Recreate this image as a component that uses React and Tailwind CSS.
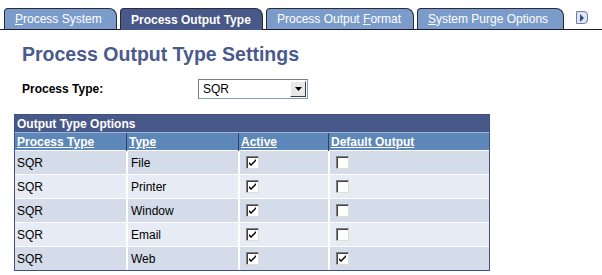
const tabs = [
  { pre: "", u: "P", post: "rocess System", w: "w-[113px]" },
  { pre: "Process Output Type", u: "", post: "", w: "w-[143px]", active: true },
  { pre: "Process Output ", u: "F", post: "ormat", w: "w-[148px]" },
  { pre: "", u: "S", post: "ystem Purge Options", w: "w-[147px]" },
];

const rows = [
  { type: "File", def: false },
  { type: "Printer", def: false },
  { type: "Window", def: false },
  { type: "Email", def: false },
  { type: "Web", def: true },
];

const Check = ({ on }) => (
  <span className="inline-flex items-center justify-center w-[13px] h-[13px] bg-white border border-t-[#808080] border-l-[#808080] border-r-[#e0ddd5] border-b-[#e0ddd5] shadow-[inset_1px_1px_0_#404040]">
    {on && (
      <svg width="9" height="9" viewBox="0 0 9 9">
        <path d="M1 4 L3 6 L8 1 L8 3 L3 8 L1 6 Z" fill="#000" />
      </svg>
    )}
  </span>
);

export default function App() {
  return (
    <div className="w-[602px] h-[275px] bg-white font-['Liberation_Sans',Arial,sans-serif] text-black overflow-hidden">
      <div className="flex items-end pl-[4px] pt-[8px] border-b border-[#1a1a2e] h-[30px]">
        {tabs.map((t, i) => (
          <div
            key={i}
            className={`${t.w} h-[21px] mr-[3px] flex items-center pl-[10px] text-[12px] text-white border border-[#2a2a3a] rounded-tl-[4px] rounded-tr-[8px] ${
              t.active ? "bg-[#485888] font-bold border-b-0 h-[22px] -mb-px" : "bg-[#7b9ccb] border-b-0"
            }`}
          >
            <span className="whitespace-pre">
              {t.pre}
              {t.u && <span className="underline">{t.u}</span>}
              {t.post}
            </span>
          </div>
        ))}
        <div className="ml-[9px] mb-[5px] w-[12px] h-[13px] border border-[#6b7fa8] rounded-r-[4px] bg-[#dfe6f2] flex items-center justify-center">
          <svg width="6" height="8" viewBox="0 0 6 8">
            <path d="M1 0 L5 4 L1 8 Z" fill="#3a4a80" />
          </svg>
        </div>
      </div>

      <div className="pl-[22px] pt-[13px] text-[19.5px] font-bold text-[#4a5a8c] leading-[22px]">
        Process Output Type Settings
      </div>

      <div className="flex items-center mt-[14px] pl-[22px]">
        <div className="w-[176px] text-[12px] font-bold">Process Type:</div>
        <div className="w-[110px] h-[20px] border border-[#7f9db9] border-t-[#808080] border-l-[#808080] flex items-center justify-between bg-white">
          <span className="text-[12px] pl-[4px]">SQR</span>
          <span className="w-[16px] h-[16px] mr-[1px] bg-[#e8e8e8] border border-t-white border-l-white border-r-[#404040] border-b-[#404040] flex items-center justify-center">
            <svg width="7" height="4" viewBox="0 0 7 4">
              <path d="M0 0 L7 0 L3.5 4 Z" fill="#000" />
            </svg>
          </span>
        </div>
      </div>

      <div className="ml-[14px] mt-[15px] w-[476px] border border-[#3f4f80] text-[12px]">
        <div className="bg-[#485888] text-white font-bold h-[17px] flex items-center pl-[2px]">Output Type Options</div>
        <div className="grid grid-cols-[111px_112px_90px_1fr] bg-[#5d87b8] text-white font-bold h-[18px] border-t border-[#a0b4d4]">
          {["Process Type", "Type", "Active", "Default Output"].map((h, i) => (
            <div key={i} className={`pl-[2px] flex items-center underline ${i > 0 ? "border-l border-[#2f3f70]" : ""}`}>
              {h}
            </div>
          ))}
        </div>
        {rows.map((r, i) => (
          <div
            key={i}
            className={`grid grid-cols-[111px_112px_90px_1fr] h-[24px] border-t border-white ${i % 2 === 0 ? "bg-[#d3dce8]" : "bg-[#e6ebf4]"}`}
          >
            <div className="pl-[2px] flex items-center">SQR</div>
            <div className="pl-[3px] flex items-center border-l-2 border-white">{r.type}</div>
            <div className="pl-[6px] flex items-center border-l-2 border-white"><Check on /></div>
            <div className="pl-[6px] flex items-center border-l-2 border-white"><Check on={r.def} /></div>
          </div>
        ))}
      </div>
    </div>
  );
}
